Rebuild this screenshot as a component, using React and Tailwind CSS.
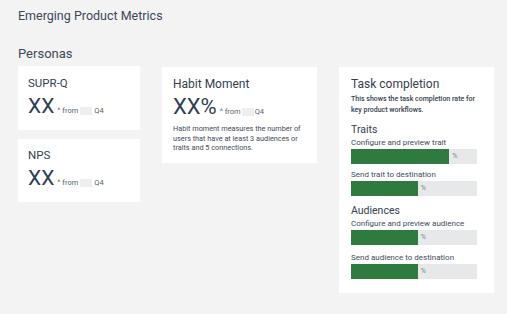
import React from "react";

const font = { fontFamily: "Roboto, 'Noto Sans', sans-serif" };

function Delta({ gap = "mx-[2px]" }) {
  return (
    <span className="text-[7.5px] text-[#555f6e] ml-[3px] flex items-center">
      <span>^ from</span>
      <span className={`inline-block w-[12px] h-[8px] bg-[#eceef0] ${gap}`}></span>
      <span>Q4</span>
    </span>
  );
}

function Bar({ label, pct, mt }) {
  return (
    <div className={mt}>
      <div className="text-[8px] leading-[10px] text-[#434b59]">{label}</div>
      <div className="mt-[1px] h-[15px] w-[126px] bg-[#e6e8ea] flex items-center">
        <div className="h-full bg-[#2f7a3e]" style={{ width: `${pct}%` }}></div>
        <span className="text-[7px] text-[#6f8f78] ml-[3px]">%</span>
      </div>
    </div>
  );
}

export default function App() {
  return (
    <div className="w-[507px] h-[314px] bg-[#f3f3f3] text-[#3c4656] overflow-hidden" style={font}>
      <div className="pl-[18px] pt-[8px]">
        <div className="text-[12.5px] leading-[16px] text-[#3d4859]">Emerging Product Metrics</div>
        <div className="mt-[22px] text-[13px] leading-[16px] text-[#3d4859]">Personas</div>
        <div className="flex mt-[4px] items-start">
          <div className="flex flex-col gap-[9px] w-[122px]">
            <div className="bg-white h-[64px] pl-[10px] pt-[10px]">
              <div className="text-[11.5px] leading-[14px] text-[#343e4e]">SUPR-Q</div>
              <div className="flex items-baseline mt-[4px]">
                <span className="text-[21px] leading-[24px] text-[#2f3f55]">XX</span>
                <Delta />
              </div>
            </div>
            <div className="bg-white h-[63px] pl-[10px] pt-[9px]">
              <div className="text-[11.5px] leading-[14px] text-[#343e4e]">NPS</div>
              <div className="flex items-baseline mt-[4px]">
                <span className="text-[21px] leading-[24px] text-[#2f3f55]">XX</span>
                <Delta />
              </div>
            </div>
          </div>
          <div className="ml-[22px] mt-[1px] bg-white w-[155px] h-[96px] pl-[11px] pt-[10px] pr-[6px]">
            <div className="text-[12px] leading-[14px] text-[#343e4e]">Habit Moment</div>
            <div className="flex items-baseline mt-[4px]">
              <span className="text-[22px] leading-[24px] text-[#2f3f55]">XX%</span>
              <Delta gap="mx-[1px]" />
            </div>
            <div className="mt-[5px] text-[7.3px] leading-[9.7px] text-[#434b59]">
              Habit moment measures the number of users that have at least 3 audiences or traits and 5 connections.
            </div>
          </div>
          <div className="ml-[22px] mt-[1px] bg-white w-[155px] h-[226px] pl-[12px] pt-[10px] pr-[6px]">
            <div className="text-[12px] leading-[14px] text-[#343e4e]">Task completion</div>
            <div className="mt-[3px] w-[128px] text-[7px] leading-[11px] text-[#343e4e] font-medium">
              This shows the task completion rate for key product workflows.
            </div>
            <div className="mt-[7px] text-[10.5px] leading-[13px] text-[#343e4e]">Traits</div>
            <Bar label="Configure and preview trait" pct={78} mt="mt-[2px]" />
            <Bar label="Send trait to destination" pct={53} mt="mt-[6px]" />
            <div className="mt-[8px] text-[10.5px] leading-[13px] text-[#343e4e]">Audiences</div>
            <Bar label="Configure and preview audience" pct={53} mt="mt-[2px]" />
            <Bar label="Send audience to destination" pct={53} mt="mt-[8px]" />
          </div>
        </div>
      </div>
    </div>
  );
}
